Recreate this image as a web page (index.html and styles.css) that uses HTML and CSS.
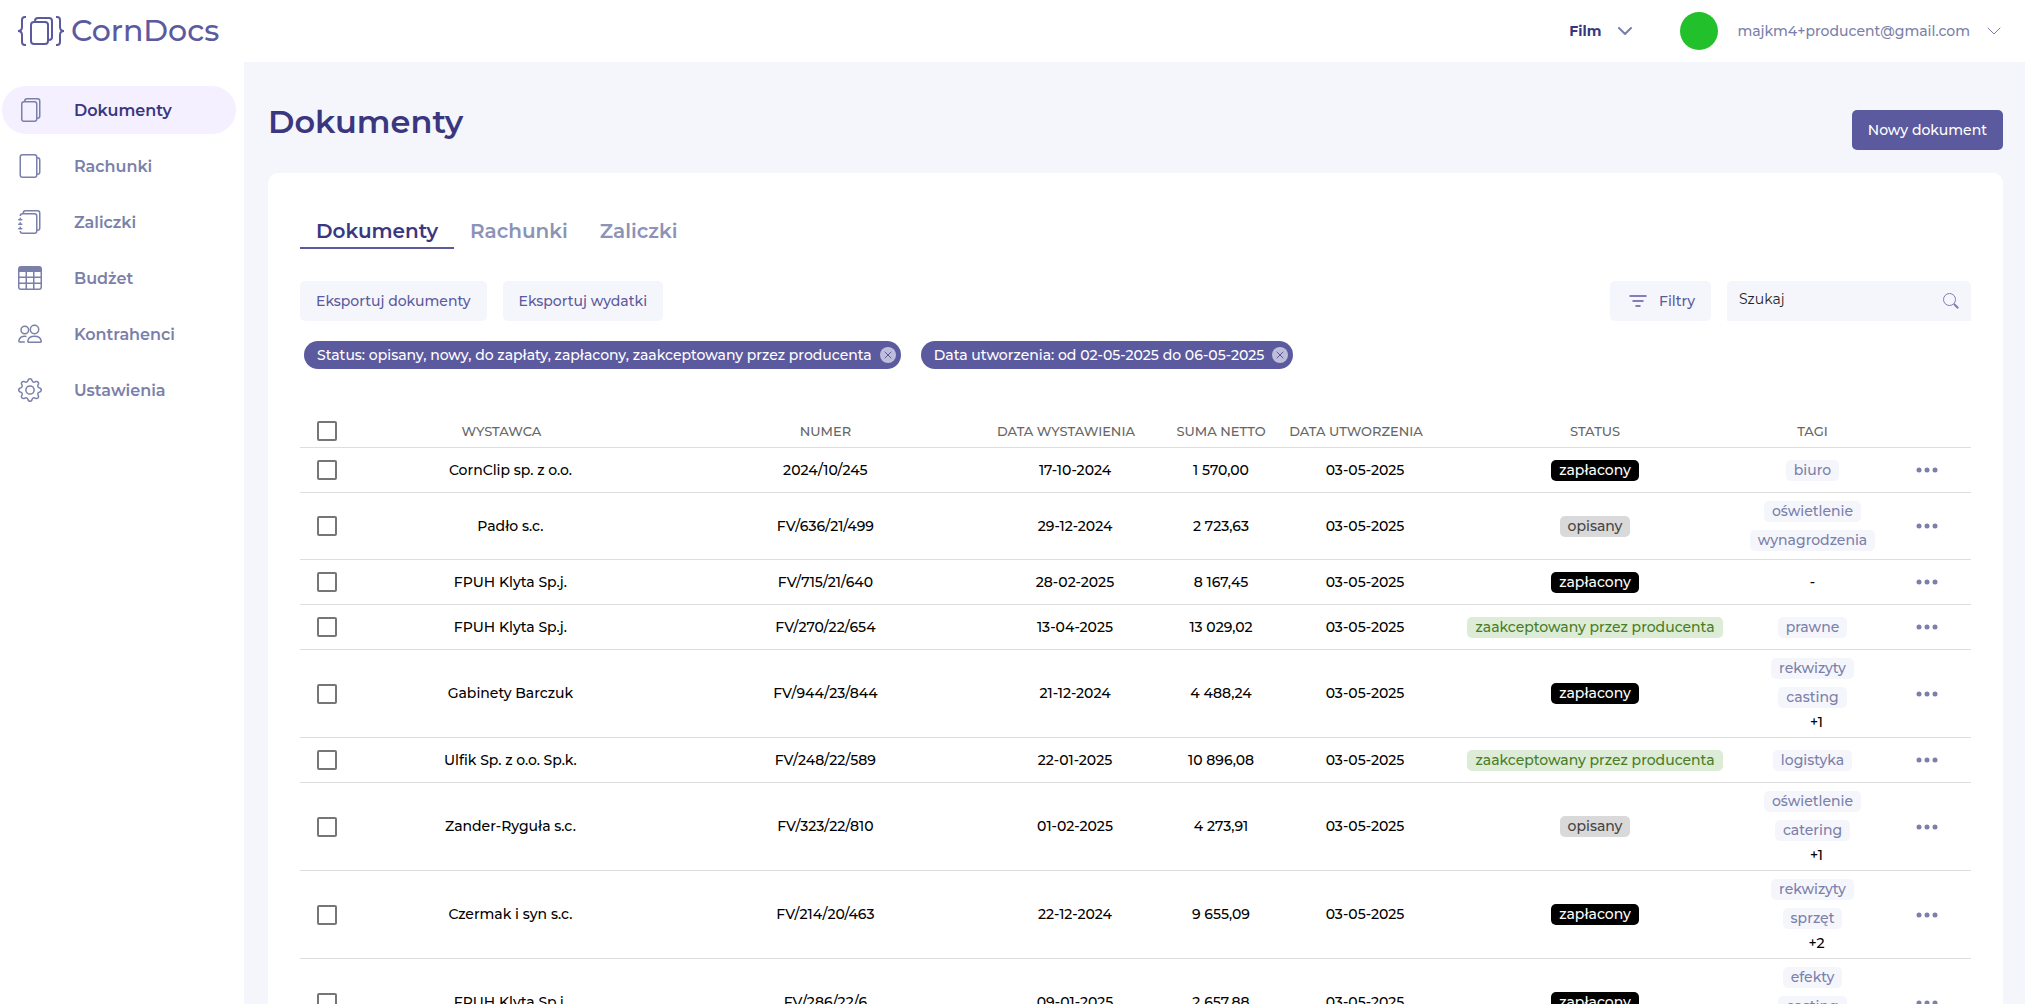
FILE: index.html
```html
<!DOCTYPE html>
<html lang="pl">
  <head>
    <meta charset="UTF-8" />
    <meta name="viewport" content="width=device-width, initial-scale=1.0" />
    <title>CornDocs - Dokumenty</title>
    <link rel="stylesheet" href="styles.css">
  </head>
  <body>
    <!-- shared icons -->
    <svg class="sprite" aria-hidden="true">
      <symbol id="chevron" viewBox="0 0 14 8"><path d="M1 1l6 6 6-6" fill="none" stroke="currentColor" stroke-linecap="round" stroke-linejoin="round" /></symbol>
      <symbol id="dots" viewBox="0 0 22 6"><circle cx="3" cy="3" r="2.5" /><circle cx="11" cy="3" r="2.5" /><circle cx="19" cy="3" r="2.5" /></symbol>
      <symbol id="remove" viewBox="0 0 16 16"><circle cx="8" cy="8" r="8" fill="#bebddb" /><path d="M5 5l6 6M11 5l-6 6" stroke="#5c5a9e" stroke-linecap="round" /></symbol>
    </svg>

    <header class="topbar">
      <a class="logo" href="#">
        <svg width="47" height="30" viewBox="0 0 47 30" fill="none" stroke="currentColor" stroke-width="2">
          <path d="M8 1H7Q4 1 4 4v7Q4 15 0 15q4 0 4 4v7q0 3 3 3h1" />
          <path d="M38 1h1q3 0 3 3v7q0 4 4 4-4 0-4 4v7q0 3-3 3h-1" />
          <rect x="13" y="6" width="17" height="22" rx="3" />
          <path d="M17 5q0-3 3-3h11q3 0 3 3v16q0 3-3 3" />
        </svg>
        <span>CornDocs</span>
      </a>
      <div class="topbar-right">
        <button type="button" class="project">Film <svg width="14" height="8" stroke-width="2"><use href="#chevron" /></svg></button>
        <span class="avatar"></span>
        <button type="button" class="account">majkm4+producent@gmail.com <svg width="14" height="8"><use href="#chevron" /></svg></button>
      </div>
    </header>

    <div class="layout">
      <nav class="sidebar">
        <a class="active" href="#">
          <svg width="24" height="24" viewBox="0 0 16 16"><path d="M13 0H6a2 2 0 0 0-2 2 2 2 0 0 0-2 2v10a2 2 0 0 0 2 2h7a2 2 0 0 0 2-2 2 2 0 0 0 2-2V2a2 2 0 0 0-2-2m0 13V4a2 2 0 0 0-2-2H5a1 1 0 0 1 1-1h7a1 1 0 0 1 1 1v10a1 1 0 0 1-1 1M3 4a1 1 0 0 1 1-1h7a1 1 0 0 1 1 1v10a1 1 0 0 1-1 1H4a1 1 0 0 1-1-1z" /></svg>
          Dokumenty
        </a>
        <a href="#">
          <svg width="24" height="24" viewBox="0 0 16 16"><path d="M11 0H3a2 2 0 0 0-2 2v12a2 2 0 0 0 2 2h8a2 2 0 0 0 2-2 2 2 0 0 0 2-2V4a2 2 0 0 0-2-2 2 2 0 0 0-2-2m2 3a1 1 0 0 1 1 1v8a1 1 0 0 1-1 1zM2 2a1 1 0 0 1 1-1h8a1 1 0 0 1 1 1v12a1 1 0 0 1-1 1H3a1 1 0 0 1-1-1z" /></svg>
          Rachunki
        </a>
        <a href="#">
          <svg width="24" height="24" viewBox="0 0 16 16"><path d="M5 0h8a2 2 0 0 1 2 2v10a2 2 0 0 1-2 2 2 2 0 0 1-2 2H3a2 2 0 0 1-2-2h1a1 1 0 0 0 1 1h8a1 1 0 0 0 1-1V4a1 1 0 0 0-1-1H3a1 1 0 0 0-1 1H1a2 2 0 0 1 2-2h8a2 2 0 0 1 2 2v9a1 1 0 0 0 1-1V2a1 1 0 0 0-1-1H5a1 1 0 0 0-1 1H3a2 2 0 0 1 2-2" /><path d="M1 6v-.5a.5.5 0 0 1 1 0V6h.5a.5.5 0 0 1 0 1h-2a.5.5 0 0 1 0-1zm0 3v-.5a.5.5 0 0 1 1 0V9h.5a.5.5 0 0 1 0 1h-2a.5.5 0 0 1 0-1zm0 2.5v.5H.5a.5.5 0 0 0 0 1h2a.5.5 0 0 0 0-1H2v-.5a.5.5 0 0 0-1 0" /></svg>
          Zaliczki
        </a>
        <a href="#">
          <svg width="24" height="24" viewBox="0 0 16 16"><path d="M0 2a2 2 0 0 1 2-2h12a2 2 0 0 1 2 2v12a2 2 0 0 1-2 2H2a2 2 0 0 1-2-2zm15 2h-4v3h4zm0 4h-4v3h4zm0 4h-4v3h3a1 1 0 0 0 1-1zm-5 3v-3H6v3zm-5 0v-3H1v2a1 1 0 0 0 1 1zm-4-4h4V8H1zm0-4h4V4H1zm5-3v3h4V4zm4 4H6v3h4z" /></svg>
          Budżet
        </a>
        <a href="#">
          <svg class="line" width="24" height="24" viewBox="0 0 24 24"><circle cx="6.8" cy="8" r="3.8" /><circle cx="16.5" cy="7.5" r="4.2" /><path d="M8.500 14.400C4 13.500 1.200 15.800.8 19c0 .7.400 1 1 1h5M11 20.200h11c.8 0 1.300-.4 1.200-1.200-.5-3-3-4.800-6.700-4.800s-6.200 1.800-6.700 4.800c-.1.800.4 1.200 1.200 1.200z" /></svg>
          Kontrahenci
        </a>
        <a href="#">
          <svg width="24" height="24" viewBox="0 0 16 16"><path d="M8 4.754a3.246 3.246 0 1 0 0 6.492 3.246 3.246 0 0 0 0-6.492M5.754 8a2.246 2.246 0 1 1 4.492 0 2.246 2.246 0 0 1-4.492 0" /><path d="M9.796 1.343c-.527-1.79-3.065-1.79-3.592 0l-.094.319a.873.873 0 0 1-1.255.52l-.292-.16c-1.64-.892-3.433.902-2.54 2.541l.159.292a.873.873 0 0 1-.52 1.255l-.319.094c-1.79.527-1.79 3.065 0 3.592l.319.094a.873.873 0 0 1 .52 1.255l-.16.292c-.892 1.64.901 3.434 2.541 2.54l.292-.159a.873.873 0 0 1 1.255.52l.094.319c.527 1.79 3.065 1.79 3.592 0l.094-.319a.873.873 0 0 1 1.255-.52l.292.16c1.64.893 3.434-.902 2.54-2.541l-.159-.292a.873.873 0 0 1 .52-1.255l.319-.094c1.79-.527 1.79-3.065 0-3.592l-.319-.094a.873.873 0 0 1-.52-1.255l.16-.292c.893-1.64-.902-3.433-2.541-2.54l-.292.159a.873.873 0 0 1-1.255-.52zm-2.633.283c.246-.835 1.428-.835 1.674 0l.094.319a1.873 1.873 0 0 0 2.693 1.115l.291-.16c.764-.415 1.6.42 1.184 1.185l-.159.292a1.873 1.873 0 0 0 1.116 2.692l.318.094c.835.246.835 1.428 0 1.674l-.319.094a1.873 1.873 0 0 0-1.115 2.693l.16.291c.415.764-.42 1.6-1.185 1.184l-.291-.159a1.873 1.873 0 0 0-2.693 1.116l-.094.318c-.246.835-1.428.835-1.674 0l-.094-.319a1.873 1.873 0 0 0-2.692-1.115l-.292.16c-.764.415-1.6-.42-1.184-1.185l.159-.291A1.873 1.873 0 0 0 1.945 8.93l-.319-.094c-.835-.246-.835-1.428 0-1.674l.319-.094A1.873 1.873 0 0 0 3.06 4.377l-.16-.292c-.415-.764.42-1.6 1.185-1.184l.292.159a1.873 1.873 0 0 0 2.692-1.115z" /></svg>
          Ustawienia
        </a>
      </nav>

      <main class="content">
        <div class="page-head">
          <h1>Dokumenty</h1>
          <button type="button" class="btn btn-primary">Nowy dokument</button>
        </div>

        <section class="card">
          <div class="tabs">
            <a class="active" href="#">Dokumenty</a>
            <a href="#">Rachunki</a>
            <a href="#">Zaliczki</a>
          </div>

          <div class="toolbar">
            <button type="button" class="btn">Eksportuj dokumenty</button>
            <button type="button" class="btn">Eksportuj wydatki</button>
            <button type="button" class="btn btn-filter">
              <svg width="18" height="12" viewBox="0 0 18 12"><path d="M1 1h16M4 6h10M7 11h4" stroke="currentColor" stroke-width="1.500" stroke-linecap="round" /></svg>
              Filtry
            </button>
            <label class="search">
              <input type="text" placeholder="Szukaj" aria-label="Szukaj" />
              <svg width="16" height="16" viewBox="0 0 16 16" fill="none" stroke="currentColor"><circle cx="6.500" cy="6.500" r="6" /><path d="M11 11l4.200 4.200" stroke-width="2" /></svg>
            </label>
          </div>

          <div class="chips">
            <span class="chip">Status: opisany, nowy, do zapłaty, zapłacony, zaakceptowany przez producenta <button type="button" aria-label="Usuń"><svg width="16" height="16"><use href="#remove" /></svg></button></span>
            <span class="chip">Data utworzenia: od 02-05-2025 do 06-05-2025 <button type="button" aria-label="Usuń"><svg width="16" height="16"><use href="#remove" /></svg></button></span>
          </div>

          <table class="documents">
            <colgroup>
              <col class="col-check"><col class="col-issuer"><col><col class="col-issued"><col class="col-net"><col class="col-created"><col class="col-status"><col class="col-tags"><col class="col-menu">
            </colgroup>
            <thead>
              <tr>
                <th class="check"><input type="checkbox" aria-label="Zaznacz wszystkie" /></th>
                <th class="sortable">Wystawca</th>
                <th>Numer</th>
                <th class="sortable">Data wystawienia</th>
                <th>Suma netto</th>
                <th class="sortable">Data utworzenia</th>
                <th>Status</th>
                <th>Tagi</th>
                <th></th>
              </tr>
            </thead>
            <tbody>
              <tr>
                <td class="check"><input type="checkbox" aria-label="Zaznacz" /></td>
                <td>CornClip sp. z o.o.</td>
                <td>2024/10/245</td>
                <td>17-10-2024</td>
                <td>1 570,00</td>
                <td>03-05-2025</td>
                <td><span class="badge paid">zapłacony</span></td>
                <td class="tags"><span class="badge tag">biuro</span></td>
                <td><button type="button" class="menu" aria-label="Menu"><svg width="22" height="6"><use href="#dots" /></svg></button></td>
              </tr>
              <tr>
                <td class="check"><input type="checkbox" aria-label="Zaznacz" /></td>
                <td>Padło s.c.</td>
                <td>FV/636/21/499</td>
                <td>29-12-2024</td>
                <td>2 723,63</td>
                <td>03-05-2025</td>
                <td><span class="badge described">opisany</span></td>
                <td class="tags"><span class="badge tag">oświetlenie</span><span class="badge tag">wynagrodzenia</span></td>
                <td><button type="button" class="menu" aria-label="Menu"><svg width="22" height="6"><use href="#dots" /></svg></button></td>
              </tr>
              <tr>
                <td class="check"><input type="checkbox" aria-label="Zaznacz" /></td>
                <td>FPUH Klyta Sp.j.</td>
                <td>FV/715/21/640</td>
                <td>28-02-2025</td>
                <td>8 167,45</td>
                <td>03-05-2025</td>
                <td><span class="badge paid">zapłacony</span></td>
                <td class="tags">-</td>
                <td><button type="button" class="menu" aria-label="Menu"><svg width="22" height="6"><use href="#dots" /></svg></button></td>
              </tr>
              <tr>
                <td class="check"><input type="checkbox" aria-label="Zaznacz" /></td>
                <td>FPUH Klyta Sp.j.</td>
                <td>FV/270/22/654</td>
                <td>13-04-2025</td>
                <td>13 029,02</td>
                <td>03-05-2025</td>
                <td><span class="badge accepted">zaakceptowany przez producenta</span></td>
                <td class="tags"><span class="badge tag">prawne</span></td>
                <td><button type="button" class="menu" aria-label="Menu"><svg width="22" height="6"><use href="#dots" /></svg></button></td>
              </tr>
              <tr>
                <td class="check"><input type="checkbox" aria-label="Zaznacz" /></td>
                <td>Gabinety Barczuk</td>
                <td>FV/944/23/844</td>
                <td>21-12-2024</td>
                <td>4 488,24</td>
                <td>03-05-2025</td>
                <td><span class="badge paid">zapłacony</span></td>
                <td class="tags"><span class="badge tag">rekwizyty</span><span class="badge tag">casting</span><span class="more">+1</span></td>
                <td><button type="button" class="menu" aria-label="Menu"><svg width="22" height="6"><use href="#dots" /></svg></button></td>
              </tr>
              <tr>
                <td class="check"><input type="checkbox" aria-label="Zaznacz" /></td>
                <td>Ulfik Sp. z o.o. Sp.k.</td>
                <td>FV/248/22/589</td>
                <td>22-01-2025</td>
                <td>10 896,08</td>
                <td>03-05-2025</td>
                <td><span class="badge accepted">zaakceptowany przez producenta</span></td>
                <td class="tags"><span class="badge tag">logistyka</span></td>
                <td><button type="button" class="menu" aria-label="Menu"><svg width="22" height="6"><use href="#dots" /></svg></button></td>
              </tr>
              <tr>
                <td class="check"><input type="checkbox" aria-label="Zaznacz" /></td>
                <td>Zander-Ryguła s.c.</td>
                <td>FV/323/22/810</td>
                <td>01-02-2025</td>
                <td>4 273,91</td>
                <td>03-05-2025</td>
                <td><span class="badge described">opisany</span></td>
                <td class="tags"><span class="badge tag">oświetlenie</span><span class="badge tag">catering</span><span class="more">+1</span></td>
                <td><button type="button" class="menu" aria-label="Menu"><svg width="22" height="6"><use href="#dots" /></svg></button></td>
              </tr>
              <tr>
                <td class="check"><input type="checkbox" aria-label="Zaznacz" /></td>
                <td>Czermak i syn s.c.</td>
                <td>FV/214/20/463</td>
                <td>22-12-2024</td>
                <td>9 655,09</td>
                <td>03-05-2025</td>
                <td><span class="badge paid">zapłacony</span></td>
                <td class="tags"><span class="badge tag">rekwizyty</span><span class="badge tag">sprzęt</span><span class="more">+2</span></td>
                <td><button type="button" class="menu" aria-label="Menu"><svg width="22" height="6"><use href="#dots" /></svg></button></td>
              </tr>
              <tr>
                <td class="check"><input type="checkbox" aria-label="Zaznacz" /></td>
                <td>FPUH Klyta Sp.j.</td>
                <td>FV/286/22/6</td>
                <td>09-01-2025</td>
                <td>2 657,88</td>
                <td>03-05-2025</td>
                <td><span class="badge paid">zapłacony</span></td>
                <td class="tags"><span class="badge tag">efekty</span><span class="badge tag">casting</span><span class="more">+1</span></td>
                <td><button type="button" class="menu" aria-label="Menu"><svg width="22" height="6"><use href="#dots" /></svg></button></td>
              </tr>
            </tbody>
          </table>
        </section>
      </main>
    </div>
  </body>
</html>
```
FILE: styles.css
```css
* {
  box-sizing: border-box;
}
body {
  margin: 0;
  height: 100vh;
  display: flex;
  flex-direction: column;
  overflow: hidden;
  font-family: Montserrat, Inter, sans-serif;
  font-size: 14px;
  line-height: 21px;
  color: #000;
  background: #fff;
}
a {
  text-decoration: none;
}
button,
input {
  font: inherit;
}
button {
  padding: 0;
  border: none;
  background: none;
  color: inherit;
  cursor: pointer;
}
.sprite {
  display: none;
}

/* top bar */
.topbar {
  display: flex;
  justify-content: space-between;
  align-items: center;
  height: 62px;
  padding: 0 24px 0 18px;
  flex-shrink: 0;
}
.logo {
  display: flex;
  align-items: center;
  gap: 6px;
  color: #5c5a9e;
  font-size: 30px;
  line-height: 40px;
  font-weight: 500;
}
.topbar-right {
  display: flex;
  align-items: center;
  color: #7a80aa;
}
.project,
.account {
  display: flex;
  align-items: center;
  gap: 17px;
  font-weight: 500;
}
.project {
  color: #3b3680;
  font-weight: 700;
}
.project svg {
  color: #7a80aa;
}
.avatar {
  width: 38px;
  height: 38px;
  margin: 0 19px 0 48px;
  border-radius: 50%;
  background: #22c02b;
}

.layout {
  display: flex;
  flex: 1;
  min-height: 0;
}

/* sidebar */
.sidebar {
  width: 244px;
  flex-shrink: 0;
  padding: 24px 8px 24px 2px;
  display: flex;
  flex-direction: column;
  gap: 8px;
}
.sidebar a {
  display: flex;
  align-items: center;
  gap: 32px;
  height: 48px;
  padding: 0 16px;
  border-radius: 24px;
  color: #7a80aa;
  font-size: 16px;
  font-weight: 600;
}
.sidebar a.active {
  background: #f5f0ff;
  color: #3b3680;
}
.sidebar svg {
  fill: #7a80aa;
}
.sidebar svg.line {
  fill: none;
  stroke: #7a80aa;
  stroke-width: 1.5;
}

/* content */
.content {
  flex: 1;
  min-width: 0;
  padding: 36px 22px 24px 24px;
  background: #f5f6fc;
  overflow-y: auto;
  scrollbar-width: none;
}
.page-head {
  display: flex;
  justify-content: space-between;
  align-items: flex-start;
  height: 75px;
}
h1 {
  margin: 0;
  color: #3b3680;
  font-size: 32px;
  line-height: 48px;
  font-weight: 600;
}
.btn {
  height: 40px;
  padding: 0 16px;
  border-radius: 5px;
  background: #f5f6fc;
  color: #5c5a9e;
  font-weight: 500;
}
.btn-primary {
  margin-top: 12px;
  background: #5c5a9e;
  color: #fff;
}
.card {
  padding: 42px 32px;
  border-radius: 10px;
  background: #fff;
}
.tabs {
  display: flex;
  margin-bottom: 32px;
}
.tabs a {
  padding: 0 16px;
  border-bottom: 2px solid transparent;
  color: #8d92b7;
  font-size: 20px;
  line-height: 32px;
  font-weight: 600;
}
.tabs a.active {
  border-color: #5c5a9e;
  color: #3b3680;
}
.toolbar {
  display: flex;
  gap: 16px;
}
.btn-filter {
  display: flex;
  align-items: center;
  gap: 12px;
  margin-left: auto;
  padding: 0 16px 0 19px;
}
.search {
  display: flex;
  align-items: center;
  width: 244px;
  height: 40px;
  padding: 0 12px;
  border-radius: 5px 5px 0 0;
  background: #f5f6fc;
  color: #7a80aa;
}
.search input {
  flex: 1;
  min-width: 0;
  padding: 0 0 4px;
  border: none;
  outline: none;
  background: none;
  color: #212529;
}
.search input::placeholder {
  color: #212529;
  opacity: 1;
}
.chips {
  display: flex;
  flex-wrap: wrap;
  gap: 20px;
  padding: 20px 4px 49px;
}
.chip {
  display: flex;
  align-items: center;
  gap: 8px;
  height: 28px;
  padding: 0 5px 0 13px;
  border-radius: 14px;
  background: #5c5a9e;
  color: #fff;
  font-weight: 500;
}
.chip button,
.chip svg {
  display: block;
}

/* documents table */
.documents {
  width: 100%;
  table-layout: fixed;
  border-collapse: separate;
  border-spacing: 0;
  text-align: center;
  font-weight: 500;
}
.col-check { width: 60px; }
.col-issuer { width: 18%; }
.col-issued { width: 170px; }
.col-net { width: 122px; }
.col-created { width: 166px; }
.col-status { width: 294px; }
.col-tags { width: 141px; }
.col-menu { width: 88px; }

th,
td {
  height: 45px;
  padding: 0;
  border-bottom: 1px solid #dedede;
  white-space: nowrap;
}
th {
  height: 30px;
  padding-bottom: 3px;
  color: #666;
  font-size: 13px;
  font-weight: 500;
  text-transform: uppercase;
}
th.sortable {
  padding-right: 18px;
}
.check {
  padding-left: 17px;
  text-align: left;
}
.check input {
  appearance: none;
  display: block;
  width: 20px;
  height: 20px;
  margin: 0;
  border: 2px solid #767676;
  border-radius: 2px;
  background: #fff;
}
.badge {
  display: inline-block;
  padding: 0 8px;
  border-radius: 5px;
}
.paid {
  background: #000;
  color: #fff;
}
.described {
  background: #d9d9d9;
  color: #444;
}
.accepted {
  background: #dcecd7;
  color: #4a7c26;
}
.tags {
  padding: 4px 0;
}
.tag {
  display: block;
  width: fit-content;
  margin: 4px auto;
  background: #f5f6fc;
  color: #7a80aa;
}
.tag + .tag {
  margin-top: 8px;
}
.more {
  display: block;
  padding-left: 8px;
}
.menu,
.menu svg {
  display: block;
  margin: 0 auto;
  fill: #7a80aa;
}
```
